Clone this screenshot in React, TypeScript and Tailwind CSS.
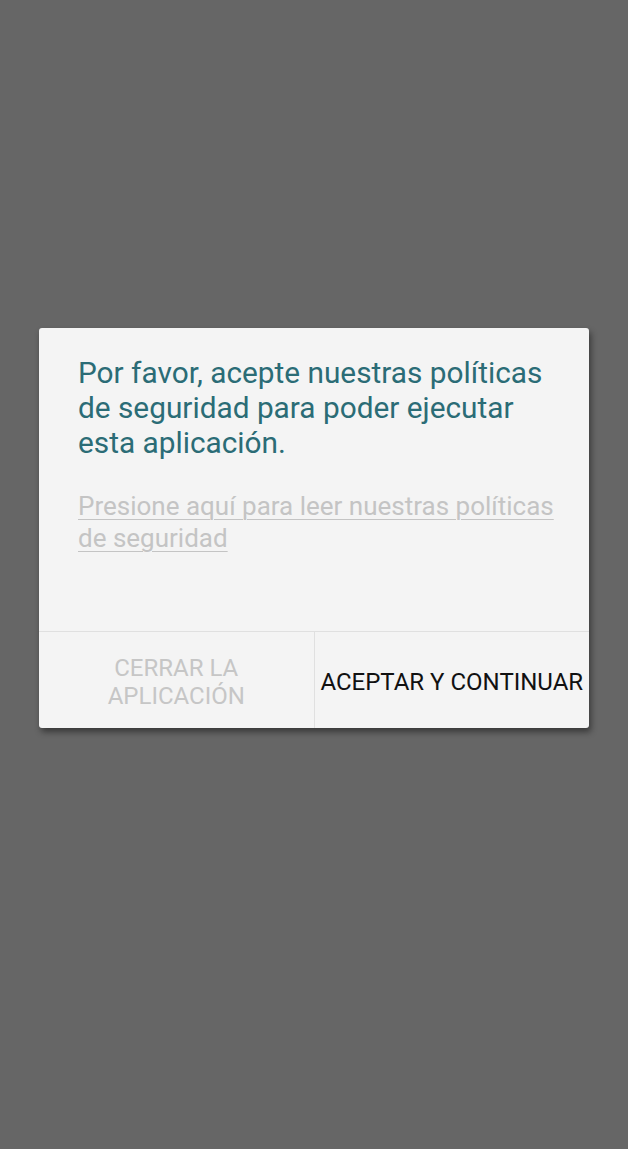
export default function App() {
  return (
    <div
      className="min-h-[1149px] w-full bg-[#666666] pt-[328px]"
      style={{ fontFamily: "Roboto, 'Liberation Sans', sans-serif" }}
    >
      <div className="mx-auto w-[550px] rounded-[3px] bg-[#f4f4f4] shadow-[2px_4px_6px_rgba(0,0,0,0.45)]">
        <div className="h-[303px] pl-[39px] pr-[30px] pt-[27px]">
          <p className="text-[29.8px] leading-[35px] text-[#2b6c76]">
            Por favor, acepte nuestras políticas de seguridad para poder ejecutar esta aplicación.
          </p>
          <p className="mt-[30px] text-[26px] leading-[32px] text-[#c4c4c4] underline decoration-1 underline-offset-[4px]">
            Presione aquí para leer nuestras políticas de seguridad
          </p>
        </div>
        <div className="flex h-[97px] border-t border-[#e0e0e0]">
          <button className="flex flex-1 items-center justify-center border-r border-[#e0e0e0] pt-[4px] text-center text-[24px] leading-[28px] text-[#c6c6c6]">
            CERRAR LA
            <br />
            APLICACIÓN
          </button>
          <button className="flex flex-1 items-center justify-center pt-[4px] text-[24px] leading-[28px] text-[#111111]">
            ACEPTAR Y CONTINUAR
          </button>
        </div>
      </div>
    </div>
  );
}
